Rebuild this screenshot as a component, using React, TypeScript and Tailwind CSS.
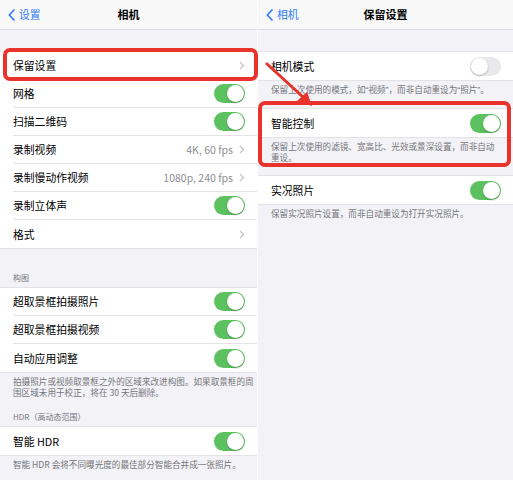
import React from 'react';

const font = { fontFamily: '"Noto Sans CJK SC", "Noto Sans", sans-serif' };

const Toggle = ({ on = true }: { on?: boolean }) => (
  <div
    className={`w-[31px] h-[19px] rounded-full flex items-center px-[1px] shrink-0 ${
      on ? 'bg-[#5bc25f] justify-end' : 'bg-[#e9e9eb] justify-start'
    }`}
  >
    <div className="w-[17px] h-[17px] rounded-full bg-white shadow-[0_1px_2px_rgba(0,0,0,0.25)]" />
  </div>
);

const Chevron = () => (
  <svg width="6" height="9" viewBox="0 0 6 9" className="shrink-0">
    <path d="M1 1l3.5 3.5L1 8" fill="none" stroke="#c4c4c7" strokeWidth="1.2" />
  </svg>
);

const Row = ({
  label,
  value,
  toggle,
  chevron,
  last,
}: {
  label: string;
  value?: string;
  toggle?: boolean | 'off';
  chevron?: boolean;
  last?: boolean;
}) => (
  <div className="h-[28px] bg-white pl-[13px] flex">
    <div
      className={`flex-1 flex items-center pr-[12px] ${last ? '' : 'border-b border-[#e3e3e6]'}`}
    >
      <span className="flex-1 text-[10.8px] text-black">{label}</span>
      {value && <span className="text-[10.5px] text-[#8e8e93] mr-[6px]">{value}</span>}
      {toggle && <Toggle on={toggle !== 'off'} />}
      {chevron && <Chevron />}
    </div>
  </div>
);

const Group = ({ children }: { children: React.ReactNode }) => (
  <div className="border-y border-[#e3e3e6]">{children}</div>
);

const Footer = ({ children }: { children: React.ReactNode }) => (
  <p className="pl-[13px] pt-[3px] text-[8.6px] leading-[11px] text-[#76767b] whitespace-nowrap">{children}</p>
);

const Header = ({ children }: { children: React.ReactNode }) => (
  <p className="px-[13px] pb-[4px] text-[8px] leading-[10px] text-[#76767b]">{children}</p>
);

const NavBar = ({ back, title }: { back: string; title: string }) => (
  <div className="h-[30px] bg-[#f8f8f8] border-b border-[#dcdce0] flex items-center relative">
    <div className="flex items-center pl-[8px] gap-[4px] text-[#2f7bf5]">
      <svg width="7" height="12" viewBox="0 0 7 12">
        <path d="M6 1L1.3 6 6 11" fill="none" stroke="#2f7bf5" strokeWidth="1.7" strokeLinecap="round" strokeLinejoin="round" />
      </svg>
      <span className="text-[10.8px]">{back}</span>
    </div>
    <span className="absolute inset-x-0 text-center text-[11px] font-bold text-black pointer-events-none">{title}</span>
  </div>
);

// narrow western quotes as in the screenshot
const Q = ({ children }: { children: React.ReactNode }) => (
  <span style={{ fontFamily: '"Liberation Sans", sans-serif' }}>{children}</span>
);

export default function App() {
  return (
    <div className="w-[513px] h-[480px] overflow-hidden flex bg-white relative" style={font}>
      {/* left: 相机 */}
      <div className="w-[257px] h-full bg-[#f2f2f7]">
        <NavBar back="设置" title="相机" />
        <div className="h-[21px]" />
        <Group>
          <Row label="保留设置" chevron />
          <Row label="网格" toggle />
          <Row label="扫描二维码" toggle />
          <Row label="录制视频" value="4K, 60 fps" chevron />
          <Row label="录制慢动作视频" value="1080p, 240 fps" chevron />
          <Row label="录制立体声" toggle />
          <Row label="格式" chevron last />
        </Group>
        <div className="h-[24px]" />
        <Header>构图</Header>
        <Group>
          <Row label="超取景框拍摄照片" toggle />
          <Row label="超取景框拍摄视频" toggle />
          <Row label="自动应用调整" toggle last />
        </Group>
        <Footer>
          拍摄照片或视频取景框之外的区域来改进构图。如果取景框的周
          <br />
          围区域未用于校正，将在 30 天后删除。
        </Footer>
        <div className="h-[14px]" />
        <Header>HDR（高动态范围）</Header>
        <Group>
          <Row label="智能 HDR" toggle last />
        </Group>
        <Footer>智能 HDR 会将不同曝光度的最佳部分智能合并成一张照片。</Footer>
      </div>

      <div className="w-px h-full bg-white" />

      {/* right: 保留设置 */}
      <div className="flex-1 h-full bg-[#f2f2f7]">
        <NavBar back="相机" title="保留设置" />
        <div className="h-[21px]" />
        <Group>
          <Row label="相机模式" toggle="off" last />
        </Group>
        <Footer>
          保留上次使用的模式，如<Q>“</Q>视频<Q>”</Q>，而非自动重设为<Q>“</Q>照片<Q>”</Q>。
        </Footer>
        <div className="h-[12px]" />
        <Group>
          <Row label="智能控制" toggle last />
        </Group>
        <Footer>
          保留上次使用的滤镜、宽高比、光效或景深设置，而非自动
          <br />
          重设。
        </Footer>
        <div className="h-[12px]" />
        <Group>
          <Row label="实况照片" toggle last />
        </Group>
        <Footer>保留实况照片设置，而非自动重设为打开实况照片。</Footer>
      </div>

      {/* annotations */}
      <div className="absolute left-[3px] top-[48px] w-[255px] h-[33px] border-[4px] border-[#e9322c] rounded-[7px] pointer-events-none" />
      <div className="absolute left-[258px] top-[101px] w-[253px] h-[66px] border-[4px] border-[#e9322c] rounded-[7px] pointer-events-none" />
      <svg className="absolute left-0 top-0 pointer-events-none" width="513" height="480">
        <line x1="266" y1="63" x2="304" y2="98" stroke="#e9322c" strokeWidth="3" />
        <path d="M312 106 L297 101 L307 92 Z" fill="#e9322c" />
      </svg>
    </div>
  );
}
